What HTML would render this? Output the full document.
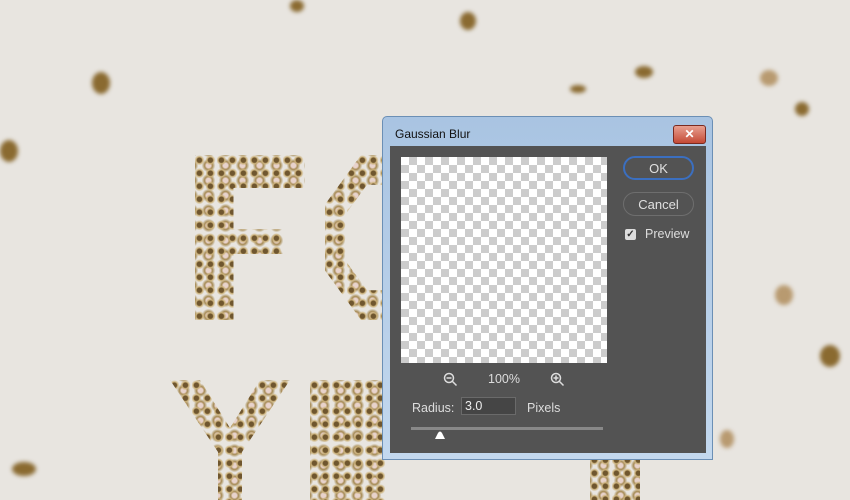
<!DOCTYPE html><html><head><style>
body{margin:0;width:850px;height:500px;overflow:hidden;background:#e8e5e0;font-family:"Liberation Sans",sans-serif;position:relative}
.b{position:absolute;border-radius:50%;background:#8a6a30;filter:blur(2px)}
.g{position:absolute;background:radial-gradient(circle at 40% 40%,#5a3e10 0 22%,#c8aa6a 32%,transparent 50%),radial-gradient(circle,#e8d0c8 0 20%,#9a7a3a 35%,transparent 60%);background-size:11px 13px,17px 15px;background-position:0 0,5px 3px;opacity:.85}
#dlg{position:absolute;left:382px;top:116px;width:331px;height:344px;background:linear-gradient(#a9c4e2,#c3d8ee);border:1px solid #6b8fb5;box-sizing:border-box;border-radius:5px 5px 0 0}
#t{position:absolute;left:12px;top:10px;font-size:12px;color:#111}
#x{position:absolute;left:290px;top:8px;width:31px;height:17px;background:linear-gradient(#e8a090,#c44a36);border:1px solid #7a2a20;border-radius:3px;color:#fff;font-size:12px;text-align:center;line-height:16px;font-weight:bold}
#p{position:absolute;left:7px;top:29px;width:316px;height:307px;background:#535353}
#pv{position:absolute;left:11px;top:11px;width:206px;height:206px;background-color:#fff;background-image:linear-gradient(45deg,#ccc 25%,transparent 25%,transparent 75%,#ccc 75%),linear-gradient(45deg,#ccc 25%,transparent 25%,transparent 75%,#ccc 75%);background-size:16px 16px;background-position:0 0,8px 8px}
.btn{position:absolute;left:233px;width:71px;height:24px;border-radius:12px;border:1px solid #6e6e6e;color:#e0e0e0;font-size:13px;text-align:center;line-height:24px;box-sizing:border-box}
.tx{position:absolute;color:#ddd;font-size:12.5px}
</style></head><body>
<div class="g" style="left:195px;top:155px;width:110px;height:165px;clip-path:polygon(0 0,100% 0,100% 20%,35% 20%,35% 45%,80% 45%,80% 60%,35% 60%,35% 100%,0 100%)"></div>
<div class="g" style="left:325px;top:155px;width:120px;height:165px;clip-path:polygon(30% 0,70% 0,100% 30%,100% 70%,70% 100%,30% 100%,0 70%,0 30%,18% 35%,18% 65%,35% 82%,65% 82%,82% 65%,82% 35%,65% 18%,35% 18%,18% 35%,0 30%)"></div>
<div class="g" style="left:170px;top:380px;width:120px;height:120px;clip-path:polygon(0 0,25% 0,50% 40%,75% 0,100% 0,60% 60%,60% 100%,40% 100%,40% 60%)"></div>
<div class="g" style="left:310px;top:380px;width:75px;height:120px"></div>
<div class="g" style="left:590px;top:455px;width:50px;height:45px"></div>
<div class="b" style="left:290px;top:0;width:14px;height:12px"></div>
<div class="b" style="left:460px;top:12px;width:16px;height:18px"></div>
<div class="b" style="left:92px;top:72px;width:18px;height:22px"></div>
<div class="b" style="left:0;top:140px;width:18px;height:22px"></div>
<div class="b" style="left:635px;top:66px;width:18px;height:12px"></div>
<div class="b" style="left:760px;top:70px;width:18px;height:16px;background:#b89a70"></div>
<div class="b" style="left:795px;top:102px;width:14px;height:14px"></div>
<div class="b" style="left:775px;top:285px;width:18px;height:20px;background:#b89a70"></div>
<div class="b" style="left:820px;top:345px;width:20px;height:22px"></div>
<div class="b" style="left:720px;top:430px;width:14px;height:18px;background:#b89a70"></div>
<div class="b" style="left:12px;top:462px;width:24px;height:14px"></div>
<div class="b" style="left:570px;top:85px;width:16px;height:8px"></div>
<div id="dlg"><div id="t">Gaussian Blur</div><div id="x">✕</div>
<div id="p"><div id="pv"></div>
<div class="btn" style="top:10px;border:2px solid #3b6fc0;line-height:21px">OK</div>
<div class="btn" style="top:46px">Cancel</div>
<div style="position:absolute;left:235px;top:83px;width:11px;height:11px;background:#ddd;border-radius:2px;color:#333;font-size:10px;line-height:11px;text-align:center;font-weight:bold">✓</div>
<div class="tx" style="left:255px;top:81px">Preview</div>
<svg style="position:absolute;left:53px;top:226px" width="16" height="16"><circle cx="6" cy="6" r="4.5" fill="none" stroke="#ddd" stroke-width="1.5"/><path d="M3.5 6h5M9.5 9.5l4 4" stroke="#ddd" stroke-width="1.5"/></svg>
<div class="tx" style="left:98px;top:226px">100%</div>
<svg style="position:absolute;left:160px;top:226px" width="16" height="16"><circle cx="6" cy="6" r="4.5" fill="none" stroke="#ddd" stroke-width="1.5"/><path d="M3.5 6h5M6 3.5v5M9.5 9.5l4 4" stroke="#ddd" stroke-width="1.5"/></svg>
<div class="tx" style="left:22px;top:255px">Radius:</div>
<div style="position:absolute;left:71px;top:251px;width:55px;height:18px;background:#454545;border:1px solid #6a6a6a;box-sizing:border-box;color:#eee;font-size:12.5px;line-height:16px;padding-left:3px">3.0</div>
<div class="tx" style="left:137px;top:255px">Pixels</div>
<div style="position:absolute;left:21px;top:281px;width:192px;height:3px;background:#888"></div>
<svg style="position:absolute;left:44px;top:284px" width="12" height="10"><path d="M1 9L4 3Q6 0 8 3L11 9Z" fill="#fff"/></svg>
</div></div>
</body></html>
